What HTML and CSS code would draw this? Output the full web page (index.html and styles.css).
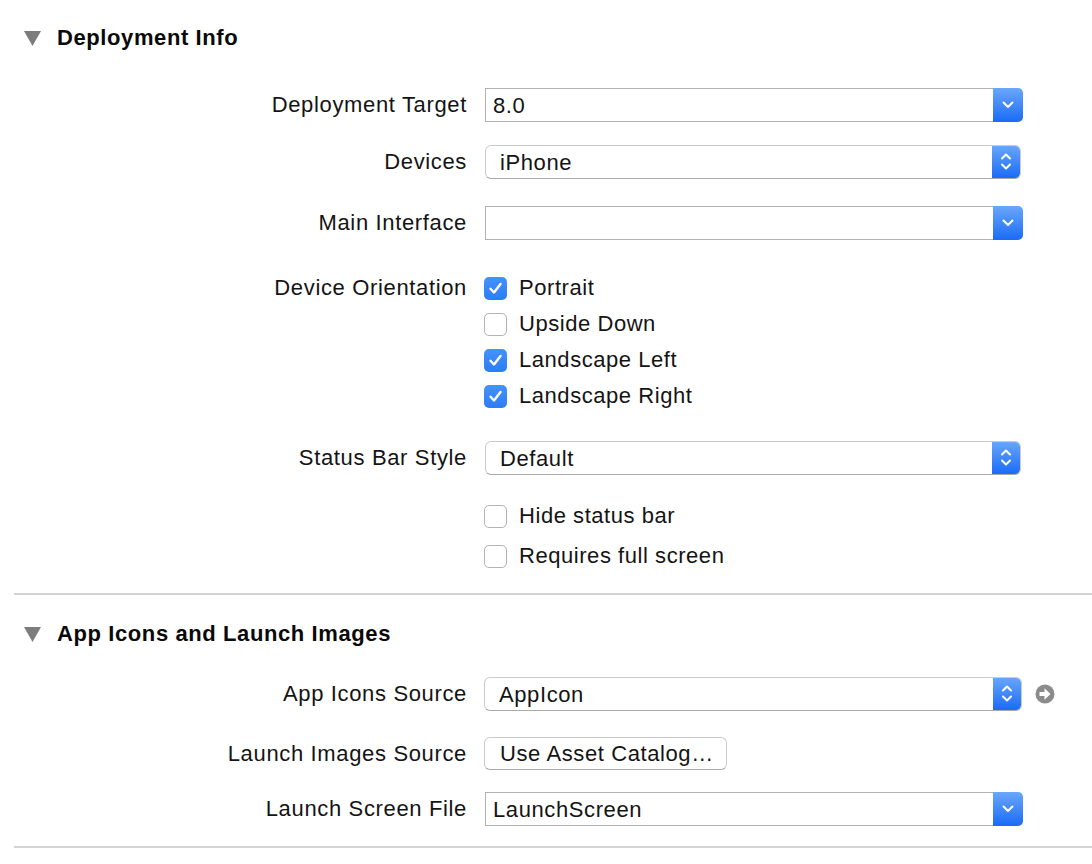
FILE: index.html
```html
<!DOCTYPE html>
<html>
<head>
<meta charset="utf-8">
<link rel="stylesheet" href="styles.css">
</head>
<body>
<div class="page">
  <div class="section-header sh1">
    <svg class="disclosure" viewBox="0 0 17 15"><polygon points="0,0 17,0 8.5,15" fill="#7d7d7d"/></svg>
    <h2>Deployment Info</h2>
  </div>

  <div class="row r1">
    <label>Deployment Target</label>
    <div class="combo"><span class="field">8.0</span><span class="bluebtn cbtn"><svg viewBox="0 0 30 34"><path d="M10.5 14.5 L15 19 L19.5 14.5" /></svg></span></div>
  </div>

  <div class="row r2">
    <label>Devices</label>
    <div class="popup"><span class="ptext">iPhone</span><span class="bluebtn pbtn"><svg viewBox="0 0 28 33"><path d="M10 13.5 L14 9.5 L18 13.5" /><path d="M10 19.5 L14 23.5 L18 19.5" /></svg></span></div>
  </div>

  <div class="row r3">
    <label>Main Interface</label>
    <div class="combo"><span class="field"></span><span class="bluebtn cbtn"><svg viewBox="0 0 30 34"><path d="M10.5 14.5 L15 19 L19.5 14.5" /></svg></span></div>
  </div>

  <div class="row r4 top">
    <label class="tall">Device Orientation</label>
    <div class="checks">
      <div class="check"><span class="box on"><svg viewBox="0 0 23 23"><path d="M6.5 11.8 L10 15.5 L16.5 7" /></svg></span>Portrait</div>
      <div class="check"><span class="box"></span>Upside Down</div>
      <div class="check"><span class="box on"><svg viewBox="0 0 23 23"><path d="M6.5 11.8 L10 15.5 L16.5 7" /></svg></span>Landscape Left</div>
      <div class="check"><span class="box on"><svg viewBox="0 0 23 23"><path d="M6.5 11.8 L10 15.5 L16.5 7" /></svg></span>Landscape Right</div>
    </div>
  </div>

  <div class="row r5">
    <label>Status Bar Style</label>
    <div class="popup"><span class="ptext">Default</span><span class="bluebtn pbtn"><svg viewBox="0 0 28 33"><path d="M10 13.5 L14 9.5 L18 13.5" /><path d="M10 19.5 L14 23.5 L18 19.5" /></svg></span></div>
  </div>

  <div class="row r6">
    <label></label>
    <div class="checks">
      <div class="check c40"><span class="box"></span>Hide status bar</div>
      <div class="check c40"><span class="box"></span>Requires full screen</div>
    </div>
  </div>

  <div class="divider d1"></div>

  <div class="section-header sh2">
    <svg class="disclosure" viewBox="0 0 17 15"><polygon points="0,0 17,0 8.5,15" fill="#7d7d7d"/></svg>
    <h2>App Icons and Launch Images</h2>
  </div>

  <div class="row r7">
    <label>App Icons Source</label>
    <div class="withicon">
      <div class="popup"><span class="ptext">AppIcon</span><span class="bluebtn pbtn"><svg viewBox="0 0 28 33"><path d="M10 13.5 L14 9.5 L18 13.5" /><path d="M10 19.5 L14 23.5 L18 19.5" /></svg></span></div>
      <svg class="goicon" viewBox="0 0 20 20"><circle cx="10" cy="10" r="9.5" fill="#8b8b8b"/><polygon points="4.5,8 9.5,8 9.5,4.2 15.5,10 9.5,15.8 9.5,12 4.5,12" fill="#fff"/></svg>
    </div>
  </div>

  <div class="row r8">
    <label>Launch Images Source</label>
    <div><span class="pushbtn">Use Asset Catalog…</span></div>
  </div>

  <div class="row r9">
    <label>Launch Screen File</label>
    <div class="combo"><span class="field">LaunchScreen</span><span class="bluebtn cbtn"><svg viewBox="0 0 30 34"><path d="M10.5 14.5 L15 19 L19.5 14.5" /></svg></span></div>
  </div>

  <div class="divider d2"></div>
</div>
</body>
</html>
```

FILE: styles.css
```css
html, body {
  margin: 0;
  padding: 0;
  background: #ffffff;
}

body {
  font-family: "Liberation Sans", Arial, sans-serif;
  color: #141414;
  font-size: 22px;
  letter-spacing: 0.6px;
}

.page {
  width: 1092px;
  padding-top: 20px;
}

.section-header {
  display: flex;
  align-items: center;
  height: 36px;
  padding-left: 24px;
}

.disclosure {
  width: 17px;
  height: 15px;
  margin-right: 16px;
}

.section-header h2 {
  margin: 0;
  font-size: 22px;
  font-weight: bold;
  color: #0a0a0a;
  letter-spacing: 0.6px;
}

.row {
  display: grid;
  grid-template-columns: 467px 538px;
  column-gap: 18px;
  align-items: center;
  height: 34px;
}

.row.top {
  align-items: start;
  height: auto;
}

.row label {
  text-align: right;
  font-size: 22px;
  letter-spacing: 0.65px;
  white-space: nowrap;
}

.row label.tall {
  line-height: 36px;
}

.r1 { margin-top: 32px; }
.r2 { margin-top: 23px; }
.r3 { margin-top: 27px; }
.r4 { margin-top: 30px; }
.r5 { margin-top: 27px; }
.r6 { margin-top: 21px; height: auto; }
.r7 { margin-top: 25px; }
.r8 { margin-top: 26px; height: 33px; }
.r9 { margin-top: 22px; }

.sh2 { margin-top: 21px; }

.divider {
  margin-left: 14px;
  height: 2px;
  background: #d3d3d3;
}

.d1 { margin-top: 17px; }
.d2 { margin-top: 20px; }

/* combo box */
.combo {
  display: flex;
  height: 34px;
  width: 538px;
}

.combo .field {
  flex: 1;
  box-sizing: border-box;
  height: 34px;
  border: 1px solid #b2b2b2;
  border-right: none;
  padding-left: 7px;
  line-height: 33px;
  background: #fff;
}

.bluebtn {
  display: block;
  background: linear-gradient(#6aa7fb, #1a6bf6);
}

.bluebtn svg path {
  fill: none;
  stroke: #ffffff;
  stroke-width: 2;
  stroke-linecap: round;
  stroke-linejoin: round;
}

.cbtn {
  width: 30px;
  height: 34px;
  border-radius: 0 5px 5px 0;
}

.cbtn svg {
  width: 30px;
  height: 34px;
  display: block;
}

/* popup button */
.popup {
  display: flex;
  flex: none;
  box-sizing: border-box;
  width: 536px;
  height: 34px;
  border: 1px solid #cbcbcb;
  border-bottom-color: #a9a9a9;
  border-radius: 6px;
  overflow: hidden;
  background: #fff;
}

.popup .ptext {
  flex: 1;
  padding-left: 14px;
  line-height: 33px;
}

.pbtn {
  width: 28px;
  height: 33px;
  margin-top: -1px;
}

.pbtn svg {
  width: 28px;
  height: 33px;
  display: block;
}

/* checkboxes */
.checks {
  display: flex;
  flex-direction: column;
}

.check {
  display: flex;
  align-items: center;
  height: 36px;
  letter-spacing: 0.55px;
}

.check.c40 {
  height: 40px;
}

.box {
  box-sizing: border-box;
  width: 23px;
  height: 23px;
  margin-left: -1px;
  margin-right: 12px;
  border-radius: 5px;
  border: 1px solid #b3b3b3;
  background: #fff;
  flex: none;
}

.box.on {
  border: none;
  background: linear-gradient(#4592f9, #2c7cf6);
}

.box svg {
  width: 23px;
  height: 23px;
  display: block;
}

.box svg path {
  fill: none;
  stroke: #fff;
  stroke-width: 2.4;
  stroke-linecap: round;
  stroke-linejoin: round;
}

/* app icon row */
.withicon {
  display: flex;
  align-items: center;
  margin-left: -1px;
}

.withicon .popup {
  width: 538px;
}

.goicon {
  width: 20px;
  height: 20px;
  margin-left: 13px;
  flex: none;
}

/* push button */
.pushbtn {
  display: inline-block;
  box-sizing: border-box;
  width: 243px;
  height: 33px;
  margin-left: -1px;
  border: 1px solid #cbcbcb;
  border-bottom-color: #a9a9a9;
  border-radius: 6px;
  padding-left: 15px;
  line-height: 31px;
  background: #fff;
}
```
